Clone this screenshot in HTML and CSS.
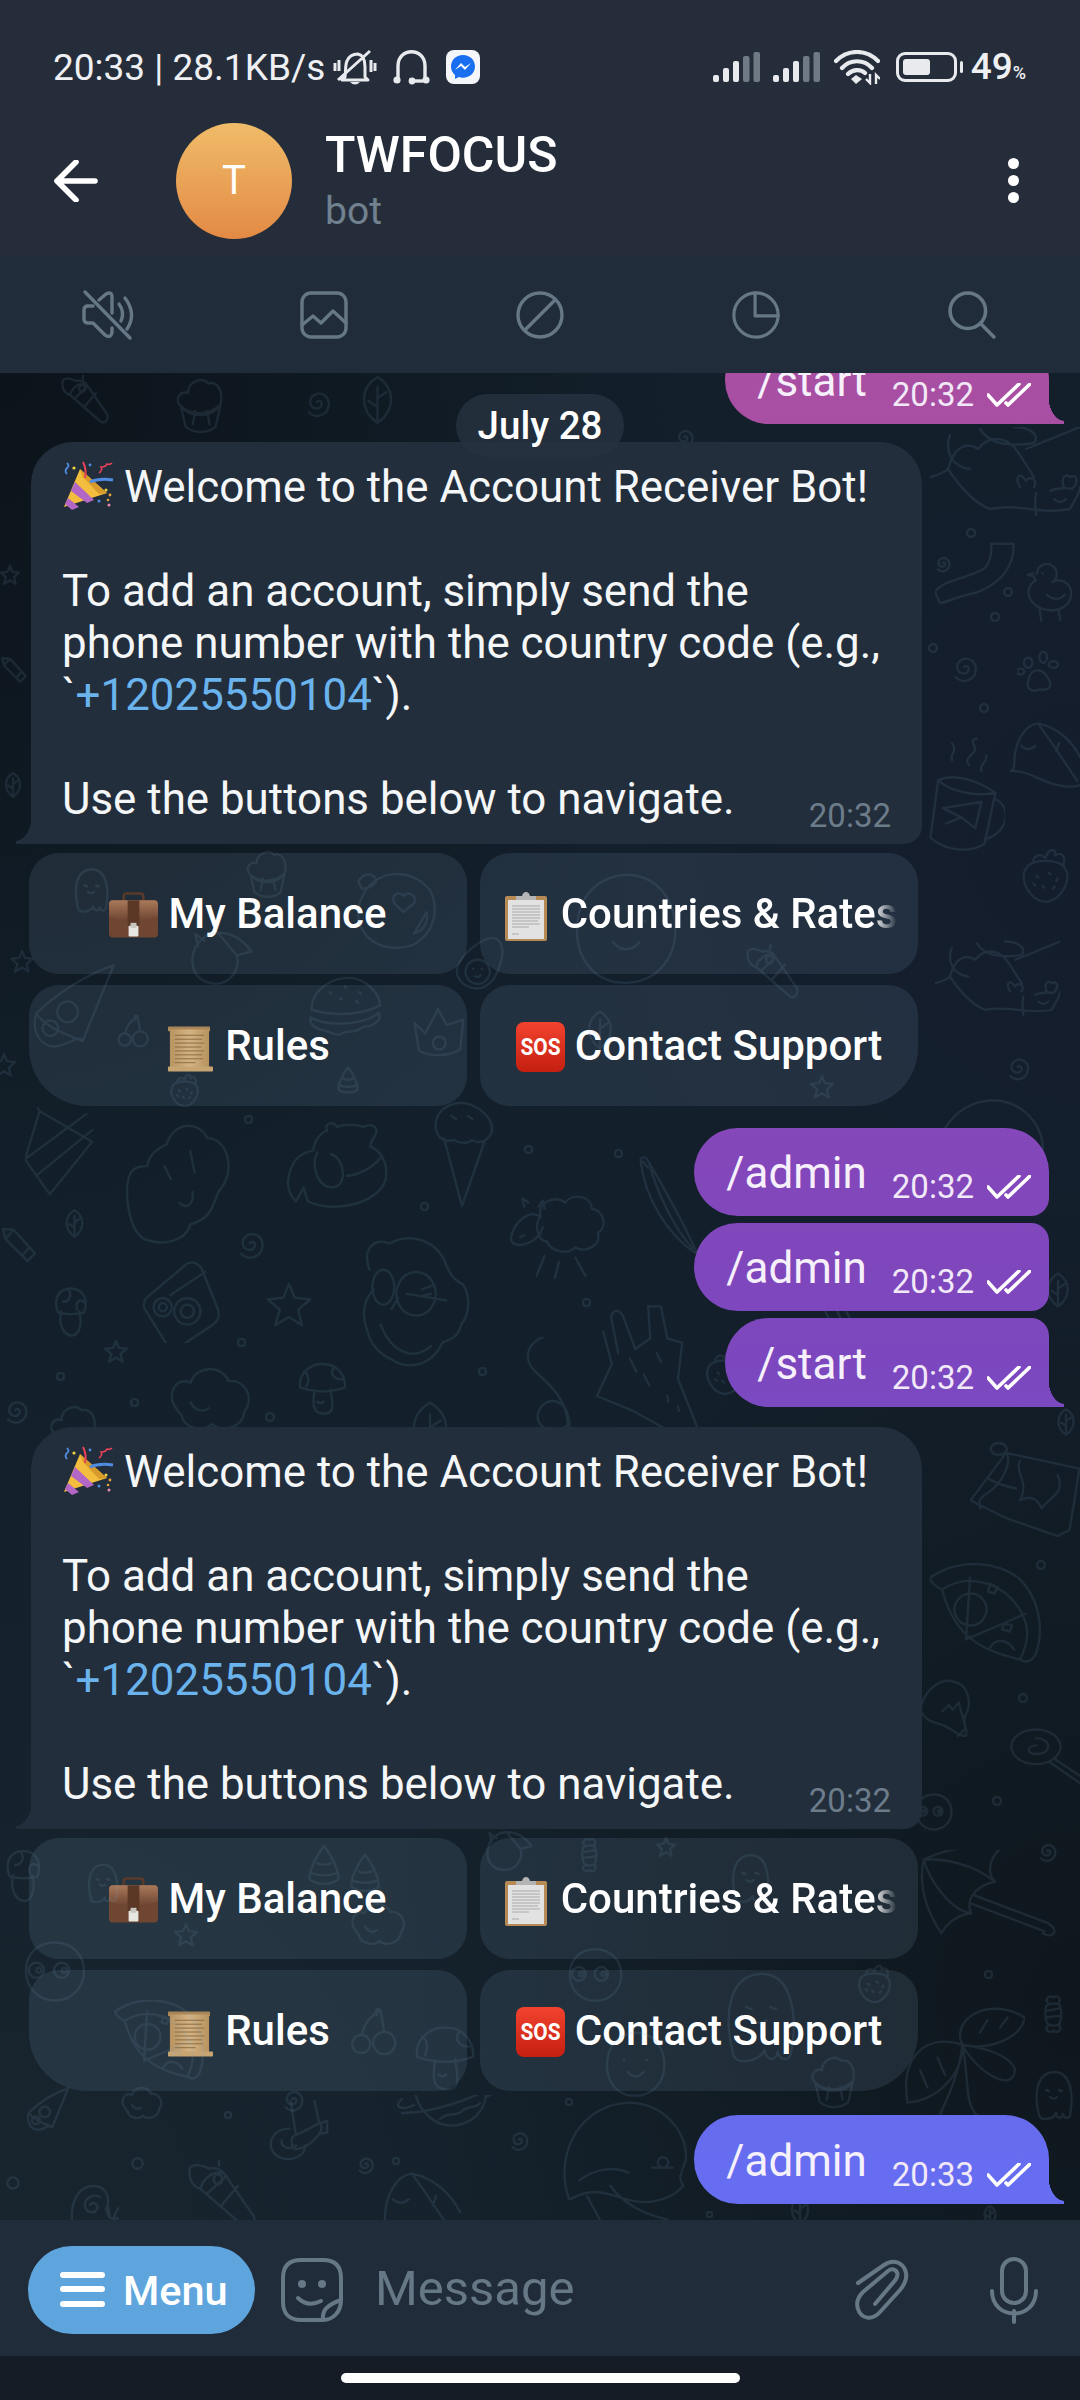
FILE: index.html
```html
<!DOCTYPE html>
<html lang="en">
<head>
<meta charset="utf-8">
<title>TWFOCUS</title>
<link rel="stylesheet" href="styles.css">
</head>
<body>
<svg class="defs" aria-hidden="true">
  <defs>
    <linearGradient id="gCase" x1="0" y1="0" x2="0" y2="1"><stop offset="0" stop-color="#a9795a"/><stop offset="1" stop-color="#6a4230"/></linearGradient>
    <linearGradient id="gSos" x1="0" y1="0" x2="0" y2="1"><stop offset="0" stop-color="#f2432f"/><stop offset="1" stop-color="#c41f10"/></linearGradient>
    <linearGradient id="gScroll" x1="0" y1="0" x2="1" y2="0"><stop offset="0" stop-color="#b8935f"/><stop offset=".5" stop-color="#d4b383"/><stop offset="1" stop-color="#b8935f"/></linearGradient>
    <symbol id="e-party" viewBox="0 0 52 52">
      <path d="M1 47 L17 9 L44 33 Z" fill="#f3bd3d"/>
      <path d="M12 22 L31 40 L24 43 L8 31Z" fill="#b266c6"/>
      <path d="M5 38 L16 47 L9 50 L2 44Z" fill="#b266c6"/>
      <path d="M17 9 L44 33 L36 34 L20 17Z" fill="#d89a2a"/>
      <path d="M27 22 Q36 18 50 20" fill="none" stroke="#4f8be0" stroke-width="3"/>
      <path d="M20 2 Q24 10 22 18" fill="none" stroke="#e8415a" stroke-width="2"/>
      <path d="M36 13 q4-3 2-6 q5 0 6-3 q3 1 5-1" fill="none" stroke="#e8415a" stroke-width="1.6"/>
      <path d="M4 3 q3 3 0 5 q-3 3 0 6" fill="none" stroke="#4f8be0" stroke-width="1.8"/>
      <circle cx="11" cy="8" r="1.6" fill="#f3d33d"/><circle cx="27" cy="5" r="1.4" fill="#4f8be0"/><circle cx="43" cy="30" r="1.5" fill="#f3d33d"/><circle cx="47" cy="35" r="1.4" fill="#e8a23d"/><circle cx="36" cy="41" r="1.5" fill="#4f8be0"/><circle cx="46" cy="45" r="1.5" fill="#f08ab0"/><circle cx="45" cy="40" r="1.3" fill="#e8a23d"/>
    </symbol>
    <symbol id="e-case" viewBox="0 0 50 46">
      <path d="M15 10 V4 Q15 1 18 1 H32 Q35 1 35 4 V10" fill="none" stroke="#5a3a28" stroke-width="2.6"/>
      <rect x="0" y="8" width="50" height="38" rx="4" fill="#6f4632"/>
      <path d="M0 24 Q25 36 50 24 V12 Q50 8 46 8 H4 Q0 8 0 12Z" fill="url(#gCase)"/>
      <rect x="19" y="8" width="12" height="26" fill="#5b3826"/>
      <rect x="20" y="34" width="10" height="11" rx="1" fill="#e8e6e2"/>
      <rect x="22" y="31" width="6" height="5" fill="#c9c6c0"/>
    </symbol>
    <symbol id="e-clip" viewBox="0 0 42 50">
      <rect x="0" y="5" width="42" height="45" rx="2" fill="#b58a55"/>
      <rect x="3" y="9" width="36" height="39" fill="#e2e2e2"/>
      <path d="M7 15H35M7 18H35M7 21H35M7 24H35M7 27H35M7 30H33M7 33H35M7 36H24" stroke="#a9a9a9" stroke-width="1"/>
      <path d="M7 43H14" stroke="#a9a9a9" stroke-width="1"/>
      <path d="M11 9 V5 H17 Q18 1 21 1 Q24 1 25 5 H31 V9Z" fill="#b4b4b4"/>
    </symbol>
    <symbol id="e-scroll" viewBox="0 0 48 50">
      <rect x="2" y="3" width="43" height="5" rx="1" fill="#a98658"/>
      <rect x="4" y="6" width="40" height="41" fill="url(#gScroll)"/>
      <path d="M9 12H39M9 16H37M9 20H39M9 24H36M9 28H39M9 32H37M9 36H38M9 40H30" stroke="#8a6c45" stroke-width="1"/>
      <rect x="2" y="44" width="46" height="5" rx="1" fill="#c7a572"/>
    </symbol>
    <symbol id="e-sos" viewBox="0 0 49 50">
      <rect x="0" y="0" width="49" height="50" rx="8" fill="url(#gSos)"/>
      <text x="24.5" y="33" text-anchor="middle" class="sos" textLength="40" lengthAdjust="spacingAndGlyphs">SOS</text>
    </symbol>
    <symbol id="ticks" viewBox="0 0 44 24">
      <path d="M1 12 L10 22 L32 1 M19 20 L21 22 L43 1" fill="none" stroke="#fff" stroke-width="3.6" stroke-linecap="round" stroke-linejoin="round"/>
    </symbol>

    <symbol id="d-sheep" viewBox="0 0 100 100"><path d="M32 38c-4-14 14-22 24-14 8-10 26-6 26 6 12 2 16 18 6 24 4 12-12 20-22 14-8 8-24 4-28-6-10 0-12-18-6-24zM32 38C20 30 6 44 3 58c-1 8 8 9 16 6 8-3 13-8 15-16M36 76L28 96M66 78l10 18M50 82l-4 16M12 58l4-2M16 28l-2-8 6 4M30 28l4-6 2 8"/></symbol>
    <symbol id="d-fox" viewBox="0 0 100 120"><path d="M10 30l8 30-14 30 34 14 36 20 26 0-20-50 4-34-14-4-6-30-12 0 2 30-14 10L28 14c-6-8-12-2-10 6l6 30M35 55l6 12M60 50l4 8M48 70l5 10M70 90l1 6M80 100l1 4"/></symbol>
    <symbol id="d-berry" viewBox="0 0 100 100"><path d="M20 40C4 60 24 96 50 98c26-2 46-38 30-58C68 28 32 28 20 40zM30 30c6-14 16-8 20-4 4-14 18-18 16-4 8-6 18 0 14 14M35 55l3 3M55 50l3 3M70 60l-2 4M45 72l3 3M62 76l3-3M30 68l3 3"/></symbol>
    <symbol id="d-creature" viewBox="0 0 150 90"><path d="M0 50C8 48 14 46 18 42 24 20 36 14 48 22 58 10 72 8 84 20 92 30 96 38 104 50M18 42C30 60 44 76 60 82 90 76 110 88 140 82 146 70 150 66 150 60M50 2C60 18 80 20 104 16 110 8 100 0 84 0M20 8C14 24 22 40 40 42M90 60c-6-10 0-16 6-6 4-6 12-2 8 6M106 66c-2 8 0 18 0 22M120 64c4-2 16-4 22-2 8-8 4-16-2-12-4-4-10 0-6 10M124 72c4 4 8 4 12 0M96 22L150 0"/></symbol>
    <symbol id="d-swirl" viewBox="0 0 100 100"><path d="M50 50c6-8 18 0 12 12-8 12-30 8-32-10-2-20 22-34 42-22 20 14 16 48-8 58-14 6-30 2-38-8"/></symbol>
    <symbol id="d-ghost" viewBox="0 0 100 100"><path d="M20 90C10 50 14 6 50 4c34 0 40 46 32 86-2 8-12 8-14-2-2 12-14 8-14-2-4 12-32 18-34 4zM34 40l6 2M60 40l6 2M42 54c4 4 10 4 14 0"/></symbol>
    <symbol id="d-cup" viewBox="0 0 100 100"><path d="M18 52c16 20 50 20 66-2l-8 36c-14 12-36 12-50 0zM18 52C6 40 18 26 30 30c0-18 22-28 34-16 14-4 26 12 20 36-20 18-48 18-66 2zM42 60l-4 22M62 60l4 22"/></symbol>
    <symbol id="d-puff" viewBox="0 0 100 100"><path d="M14 34C28 6 68 4 88 30c10 20 6 46-18 60-20 8-50 4-60-22C6 56 8 44 14 34zM8 20c6-10 16-10 20-2 0 6-8 10-16 10zM58 36c-4-6-14-2-10 8l10 10 12-10c4-8-6-14-12-8zM70 78l14-24c2 10-2 20-14 24z"/></symbol>
    <symbol id="d-pizza" viewBox="0 0 100 100"><path d="M6 60C26 40 60 16 96 4L60 92C40 84 18 76 6 60zM6 60C0 82 12 100 30 98c14-2 26-14 30-6M42 46a12 12 0 1 0 1 0zM22 68a9 9 0 1 0 1 0z"/></symbol>
    <symbol id="d-wedge" viewBox="0 0 112 100"><path d="M0 14C30-6 66-2 88 14c22 20 26 52 18 76-4 8-10 10-16 6C60 88 26 80 12 26 4 22 0 18 0 14zM12 26C40 8 76 20 92 50c8 16 6 30-2 46M36 76L40 14M36 76L96 50M40 30a16 16 0 1 0 1 0M60 20l8 4-4 6-6-2zM74 60l8 2-2 6-8-2zM60 84c6-10 18-8 24 2"/></symbol>
    <symbol id="d-cherry" viewBox="0 0 100 100"><path d="M22 60a18 18 0 1 0 1 0zM68 54a22 22 0 1 0 1 0zM24 60C28 36 40 24 60 10M68 54C66 36 64 24 60 10M60 10c-8-6-10 4-6 10"/></symbol>
    <symbol id="d-burger" viewBox="0 0 100 100"><path d="M6 50C4 20 40 2 66 8c20 6 32 24 32 36-30 14-62 14-92 6zM4 60c20 12 70 12 92-6 4 6 0 12-8 16-6 4-12 0-18 6-8 6-16 0-24 6-8 4-14-2-22-4C12 76 2 70 4 60zM30 26l2 2M50 18l2 2M70 26l2 2M44 34l2 2M66 38l2 2"/></symbol>
    <symbol id="d-crown" viewBox="0 0 100 100"><path d="M4 30l20 20L48 4l16 30 32-10-6 56c-24 14-58 14-78 2zM50 56a12 12 0 1 0 1 0z"/></symbol>
    <symbol id="d-bird" viewBox="0 0 100 100"><path d="M6 50C4 26 20 6 44 4c20 0 36 8 50 28l-22 6c6 20-10 44-34 42C20 78 8 68 6 50zM14 24l-4-18 14 10M44 4l28 34"/></symbol>
    <symbol id="d-corn" viewBox="0 0 100 100"><path d="M50 4C70 30 86 64 84 84c-16 14-52 14-68 0C14 64 30 30 50 4zM34 46c10 4 22 4 32 0M22 70c18 6 38 6 56 0"/></symbol>
    <symbol id="d-star" viewBox="0 0 100 100"><path d="M50 4l12 30 34 4-26 22 8 34-28-18-30 18 10-34L4 38l34-4z"/></symbol>
    <symbol id="d-avo" viewBox="0 0 100 100"><path d="M82 6c14 6 14 30 6 50-8 26-24 42-44 40C22 94 6 76 12 56 20 34 60 -2 82 6zM48 44a22 22 0 1 0 1 0zM40 60l1 1M56 60l1 1M44 74c4 2 8 2 10-2"/></symbol>
    <symbol id="d-rocket" viewBox="0 0 100 100"><path d="M40 -10L76 -10 86 36 50 54zM50 54c-10 2-8 18 0 22 14-2 26-10 36-24 6-10 2-16 0-16M86 36l12-4 0 18-12 2M40 44C20 44 8 58 12 74c6 18 30 22 46 10 4-4 6-8 6-14M28 62c-2 10 12 16 22 8"/></symbol>
    <symbol id="d-planet" viewBox="0 0 100 38"><path d="M18 -10C20 16 40 34 62 30 82 26 92 10 90 -10M18 10C6 16-4 12 6 4M90 2c4-2 8-4 10-6M6 18c30 0 70-14 90-26M44 24c8-8 18-2 22-8 6-6 14-2 18-8"/></symbol>
    <symbol id="d-cloud" viewBox="0 0 100 100"><path d="M14 50C2 36 14 14 30 22 36 2 66 2 72 20c18-2 30 18 18 34-2 18-26 24-36 14-10 10-32 4-34-10-2-2-4-4-6-8zM30 44c4 8 14 12 20 6"/></symbol>
    <symbol id="d-cloudbear" viewBox="0 0 100 115"><path d="M20 40C22 28 32 22 38 20 44 0 66-4 76 14c18 0 28 30 10 50-6 14-6 24-26 30-4 16-26 20-42 14C2 100-2 60 4 48c2-6 8-8 16-8zM36 40l6 12M60 26l4 20M50 74c6 6 14 2 12-10"/></symbol>
    <symbol id="d-hamster" viewBox="0 0 100 100"><path d="M0 66C2 44 14 36 26 34 26 24 36 14 40 14c-4-8 6-10 10-4 10-4 20-2 28 0 6-4 14 0 12 6-2 6-6 8-6 14 10 4 18 16 16 32-4 24-50 38-80 24L16 72 8 86C2 80 0 72 0 66zM30 36c-6 10-2 34 14 36 18 0 14-30 0-34M60 60c10 0 26-8 34-18"/></symbol>
    <symbol id="d-owl" viewBox="0 0 100 120"><path d="M8 30C0 10 14 0 26 6c18-10 40-4 50 14 6 18 12 20 18 24 6 10 6 26-2 36-4 16-16 14-18 18-12 24-36 22-46 14-10-4-20-14-22-26C0 70 2 58 12 48M20 30a10 16 0 1 0 1 0zM50 32a18 20 0 1 0 1 0zM42 52l36 6M56 48l10-4M56 54l8-2M18 80c10 26 30 34 46 20M34 56l-6 10"/></symbol>
    <symbol id="d-snail" viewBox="0 0 100 100"><path d="M4 80C0 30 24 6 50 8c24 2 32 28 22 46l6 16c6 4 12 6 18 2M40 46c6-8 18-2 14 8-4 10-22 8-24-6-2-14 14-26 30-18M80 70l-4-22M88 70l8-18"/></symbol>
    <symbol id="d-cream" viewBox="0 0 100 100"><path d="M20 40l60 52c10 8 18-4 14-14L54 20c-12-8-30 4-34 20zM20 40C8 36 2 24 6 10c8-6 18-2 26 2 6-2 18 0 22 8M30 46l26-24M50 62l22-26M46 8l0-8M44 20a6 7 0 1 0 1 0z"/></symbol>
    <symbol id="d-whale" viewBox="0 0 100 100"><path d="M6 76C-6 40 16 2 54 2c30 2 44 28 42 44-4 12-6 14-2 20-8 10-24 14-36 12-16-2-30-14-50-2zM14 62C24 54 40 50 52 56M20 74c8 14 12 24 16 26M38 66c10 14 26 22 44 26M78 44a4 4 0 1 0 1 0zM70 52h16"/></symbol>
    <symbol id="d-camera" viewBox="0 0 100 100"><path d="M6 46L56 4c8-4 14 0 18 6l20 50c2 8 0 14-6 18L46 106c-6 4-12 0-16-6L4 58c-2-4 0-8 2-12zM26 46a11 11 0 1 0 1 0zM26 52a5 5 0 1 0 1 0zM56 46a16 16 0 1 0 1 0zM56 54a8 8 0 1 0 1 0zM36 42L78 14"/></symbol>
    <symbol id="d-choc" viewBox="0 0 110 100"><path d="M0 62L36 14 110 30 100 92 88 98 36 80zM18 40c10 6 18 8 28 10M36 14c6 10-4 30-18 40-6 4-12 8-8 16M50 22c-6 12 10 20 0 40 14-8 20 4 22 8 8-12 24-14 16-34M28 4a8 6 0 1 0 1 0z"/></symbol>
    <symbol id="d-umbrella" viewBox="0 0 140 120"><path d="M4 10C30-4 70-6 80 0 70 10 68 24 76 32 56 36 46 50 52 64 30 60 10 30 4 10zM4 10C0 30 2 54 22 84 28 72 42 64 52 64M4 10c20-2 50 4 72 22M56 46L130 74c12 8 4 16-6 10M52 54L126 82"/></symbol>
    <symbol id="d-leaf" viewBox="0 0 100 100"><path d="M50 4C86 26 86 70 50 96 14 70 14 26 50 4zM50 24v72M50 46l18-12M50 64l-18-12"/></symbol>
    <symbol id="d-leaffish" viewBox="0 0 100 100"><path d="M6 60C6 30 20 4 40 2c30 6 50 28 60 48M6 60c0 6 0 8-6 10 20-2 40 12 60 18 14 4 30 6 40 2M40 2C60 30 80 60 96 84M16 34c6 6 14 6 20 0M70 30l-4 12"/></symbol>
    <symbol id="d-pencil" viewBox="0 0 100 100"><path d="M8 8L36 10 92 72 72 92 14 34zM14 34L36 10M76 58L58 78"/></symbol>
    <symbol id="d-banana" viewBox="0 0 100 160"><path d="M4 6C10 0 14 4 18 12 40 50 70 100 96 160 50 130 10 70 4 6zM18 12C30 60 60 120 88 150M8 10l8 10"/></symbol>
    <symbol id="d-icecream" viewBox="0 0 100 140"><path d="M10 40C2 14 34-6 58 6c22 10 34 30 20 44-6 6-16 6-20 2-8 6-20 4-24 0-8 2-20 2-24-12zM20 50L44 140 74 54M30 20l6 4M52 20l6 4"/></symbol>
    <symbol id="d-mush" viewBox="0 0 100 110"><path d="M6 50C2 20 30 2 52 4c26 0 44 22 42 46-28 10-60 10-88 0zM34 56C32 78 30 90 40 98c10 6 24 4 28-4 4-10 0-24-2-40M14 18a12 18 0 0 1 4 30M72 12a18 14 0 0 0 16 22M40 78c4 4 8 4 12 0"/></symbol>
    <symbol id="d-shroom" viewBox="0 0 70 100"><path d="M8 50C-2 24 8 2 34 2c24 0 36 24 26 48-16 4-36 4-52 0zM14 48c-4 20 0 44 20 48 16 2 24-24 16-48M30 6a12 14 0 0 1-12 22M60 30c-8-8-18-2-14 14"/></symbol>
    <symbol id="d-noodle" viewBox="0 0 100 80"><path d="M70 4H98C100 40 70 62 40 68 24 72 12 78 6 78L0 64C12 48 40 48 60 36 68 30 72 16 70 4z"/></symbol>
    <symbol id="d-duck" viewBox="0 0 100 130"><path d="M22 24a22 22 0 1 1 34 18c12-8 42-4 42 26 0 28-30 40-52 36C22 100 0 84 4 58 6 48 12 42 20 38 16 34 14 30 14 28L0 26l14-4M28 104l4 24M70 104l4 22M44 70c12 12 30 12 40 0M34 22l1 1"/></symbol>
    <symbol id="d-paw" viewBox="0 0 100 100"><path d="M30 60C36 44 56 40 68 56c8 12 16 20 8 32-8 8-18 2-24 4-8 4-22 4-26-8-2-10 2-16 4-24zM26 16a10 12 0 1 0 1 0zM62 2a9 13 0 1 0 1 0zM86 24a11 8 0 1 0 1 0zM8 42a9 7 0 1 0 1 0z"/></symbol>
    <symbol id="d-mug" viewBox="0 0 100 150"><path d="M14 56L4 130c20 18 52 20 70 8l14-66C64 56 34 46 14 56zM14 56C30 70 60 78 88 72M86 80c22 6 22 44-12 52M20 92l50-8-8 34-18-14-20 8M20 92l24 12M32 30c-4-10 8-8 0-22M54 36c-10-10 14-14 6-26-4-6 2-8 4-8M70 44c-4-8 8-10 6-20"/></symbol>
    <symbol id="d-lolli" viewBox="0 0 100 90"><path d="M40 2a34 24 0 1 1-1 0zM40 14c20 0 24 22 0 22-14 0-14-12 0-12M64 42L100 66M60 48L100 76"/></symbol>
    <symbol id="d-bulb" viewBox="0 0 80 100"><path d="M0 50C8 14 34 0 52 4 78 8 84 40 72 60 68 70 76 84 74 90 68 98 44 74 30 72 16 70 6 62 0 50zM60 92l12-12M36 52l10-10 6 8 10-12 12 44"/></symbol>
    <symbol id="d-palm" viewBox="0 0 100 100"><path d="M50 40C40 20 70 0 100 18 96 36 70 44 50 40zM50 40C20 30 0 50 6 86 30 84 50 64 50 40zM50 40C60 60 90 80 92 60 90 50 70 42 50 40zM50 40C56 70 50 90 66 100M50 40C46 70 34 90 30 100M16 60l6 14M30 50l6 14M64 30l6-10M80 26l6-8"/></symbol>
    <symbol id="d-candy" viewBox="0 0 50 100"><path d="M8 30C4 50 6 70 14 76 22 80 34 80 40 76 46 66 48 46 42 28 34 22 16 22 8 30zM14 24C4 16 10 2 26 8 38 2 48 12 38 24M14 78C2 86 12 100 26 92 40 100 48 88 40 76M12 42l30-6M10 58l32-4"/></symbol>
    <symbol id="d-squiggle" viewBox="0 0 50 95"><path d="M18 0C0 8-2 24 10 36 26 50 44 66 44 92M44 92C40 96 24 100 16 92 6 80 20 62 34 68 46 74 46 90 46 96"/></symbol>
    <symbol id="d-cake" viewBox="0 0 100 120"><path d="M20 4L92 46 34 118 0 70zM0 70L84 8M16 92L92 30M20 4c-6-6 0-12 8-8"/></symbol>
    <symbol id="d-face" viewBox="0 0 100 100"><path d="M10 50C10 20 30 4 54 4c24 2 38 22 38 46 0 26-18 44-42 44S10 76 10 50zM34 42l1 1M66 42l1 1M40 60c6 8 16 8 22 0"/></symbol>
    <symbol id="d-tv" viewBox="0 0 100 100"><path d="M4 50C4 20 24 4 50 4c28 0 46 20 46 46 0 26-20 46-46 46S4 76 4 50zM20 36a12 12 0 1 0 1 0zM60 36a12 12 0 1 0 1 0zM24 44a4 4 0 1 0 1 0zM64 44a4 4 0 1 0 1 0z"/></symbol>
    <symbol id="d-ring" viewBox="0 0 100 100"><circle cx="50" cy="50" r="40"/></symbol>
  </defs>
</svg>

<main class="phone">
  <header class="top">
    <div class="status">
      <div class="status-left">
        <span class="status-text">20:33 | 28.1KB/s</span>
        <svg class="ic-bell" viewBox="0 0 44 37"><path d="M12 28 C13 22 12 16 14 12 C16 7 20 5 25 5 C30 6 32 12 32 18 V28 L35 31 H9 Z M5 31 L37 2 M2 14 v8 M6 11 v11 M38 11 v12 M42 14 v8"/><path d="M17 33 H27 Q22 38 17 33Z" class="bell-fill"/></svg>
        <svg class="ic-phones" viewBox="0 0 37 35"><path d="M5 29 V16 C5 -3 32 -3 32 16 V29"/><circle cx="4" cy="30" r="3.6"/><circle cx="33" cy="30" r="3.6"/><circle cx="19" cy="31" r="3.4"/><path d="M19 31 H30"/></svg>
        <svg class="ic-messenger" viewBox="0 0 34 34"><rect width="34" height="34" rx="8" fill="#f4f6fa"/><path d="M17 5 C10 5 5 10 5 16.5 C5 20 6.5 23 9 25 V29 L13 27 C14 27.5 15.5 27.7 17 27.7 C24 27.7 29 22.7 29 16.5 C29 10 24 5 17 5Z" fill="#1a6ff0"/><path d="M9 20 L15 13 L19 17 L25 13 L19 20 L15 16Z" fill="#fff"/></svg>
      </div>
      <div class="status-right">
        <svg class="ic-signal" viewBox="0 0 47 30"><rect y="23" width="6" height="7" rx="2" fill="#e8eaee"/><rect x="10" y="16" width="6" height="14" rx="2" fill="#e8eaee"/><rect x="20" y="9" width="6" height="21" rx="2" fill="#e8eaee"/><rect x="30" y="4" width="6.5" height="26" rx="2" fill="#707a85"/><rect x="40.500" y="0" width="6.500" height="30" rx="2" fill="#707a85"/></svg>
        <svg class="ic-signal" viewBox="0 0 47 30"><rect y="23" width="6" height="7" rx="2" fill="#e8eaee"/><rect x="10" y="16" width="6" height="14" rx="2" fill="#e8eaee"/><rect x="20" y="9" width="6" height="21" rx="2" fill="#e8eaee"/><rect x="30" y="4" width="6.5" height="26" rx="2" fill="#707a85"/><rect x="40.500" y="0" width="6.500" height="30" rx="2" fill="#707a85"/></svg>
        <svg class="ic-wifi" viewBox="0 0 46 35"><path d="M2 11 C14 -1 32 -1 44 11 M8 18 C16 9 30 9 38 18 M14 24 C19 19 27 19 31 23" fill="none" stroke="#e8eaee" stroke-width="4.2" stroke-linecap="round"/><path d="M17 29 L22 25 L28 29 L22 34Z" fill="#e8eaee"/><path d="M36 24 V33 L32 29 M42 34 V25 L46 29" fill="none" stroke="#e8eaee" stroke-width="2.4"/></svg>
        <span class="battery"><span class="battery-fill"></span></span>
        <span class="battery-nub"></span>
        <span class="battery-text">49<small>%</small></span>
      </div>
    </div>
    <div class="title-row">
      <svg class="ic-back" viewBox="0 0 44 42"><path d="M3 21 H41 M22 2 L3 21 L22 40" fill="none" stroke="#fff" stroke-width="5.6" stroke-linecap="round" stroke-linejoin="round"/></svg>
      <div class="avatar">T</div>
      <div class="title-text">
        <div class="name">TWFOCUS</div>
        <div class="sub">bot</div>
      </div>
      <div class="dots"><i></i><i></i><i></i></div>
    </div>
  </header>

  <nav class="tabs">
    <svg class="tab-ic tab-mute" viewBox="0 0 54 48"><path d="M2 1 L47 47 M10 15 H5 Q1 15 1 19 V28 Q1 32 5 32 H10 L22 44 Q28 48 29 41 V37 M16 9 L23 3 Q29 0 29 6 V22 M36 13 Q42 21 38 30 M42 7 Q54 23 44 38"/></svg>
    <svg class="tab-ic" viewBox="0 0 48 48"><rect x="2" y="2" width="44" height="44" rx="9"/><path d="M2 34 L13 25 L21 32 L33 20 L46 32"/></svg>
    <svg class="tab-ic" viewBox="0 0 48 48"><circle cx="24" cy="24" r="22"/><path d="M9 39 L39 9"/></svg>
    <svg class="tab-ic" viewBox="0 0 52 52"><circle cx="26" cy="26" r="24"/><path d="M25 2 V27 H50"/></svg>
    <svg class="tab-ic" viewBox="0 0 46 46"><circle cx="19" cy="19" r="17"/><path d="M31 31 L44 44"/></svg>
  </nav>

  <section class="chat">
    <svg class="wall" viewBox="0 373 1080 1847" aria-hidden="true">
      <use href="#d-cream" x="60" y="375" width="50" height="50"/>
      <use href="#d-cup" x="165" y="375" width="70" height="60"/>
      <use href="#d-swirl" x="300" y="385" width="34" height="34"/>
      <use href="#d-leaf" x="350" y="375" width="55" height="50"/>
      <use href="#d-swirl" x="672" y="425" width="24" height="24"/>
      <use href="#d-pencil" x="0" y="640" width="28" height="60"/>
      <use href="#d-star" x="0" y="560" width="20" height="30"/>
      <use href="#d-leaf" x="0" y="760" width="26" height="50"/>

      <use href="#d-creature" x="930" y="427" width="150" height="90"/>
      <use href="#d-noodle" x="935" y="540" width="80" height="65"/>
      <use href="#d-swirl" x="932" y="553" width="21" height="20"/>
      <use href="#d-duck" x="1027" y="563" width="45" height="59"/>
      <use href="#d-ring" x="966" y="528" width="10" height="10"/>
      <use href="#d-ring" x="1003" y="587" width="10" height="10"/>
      <use href="#d-ring" x="990" y="612" width="10" height="10"/>
      <use href="#d-ring" x="928" y="643" width="10" height="10"/>
      <use href="#d-ring" x="979" y="703" width="10" height="10"/>
      <use href="#d-swirl" x="947" y="650" width="34" height="34"/>
      <use href="#d-paw" x="1017" y="650" width="42" height="44"/>
      <use href="#d-leaffish" x="1010" y="722" width="70" height="70"/>
      <use href="#d-mug" x="927" y="737" width="78" height="116"/>

      <use href="#d-ghost" x="69" y="857" width="45" height="66"/>
      <use href="#d-cup" x="241" y="847" width="52" height="53"/>
      <use href="#d-puff" x="351" y="860" width="90" height="97"/>
      <use href="#d-bird" x="169" y="930" width="106" height="67"/>
      <use href="#d-pizza" x="31" y="953" width="86" height="104"/>
      <use href="#d-cherry" x="117" y="1003" width="34" height="54"/>
      <use href="#d-burger" x="303" y="973" width="83" height="74"/>
      <use href="#d-crown" x="410" y="1007" width="58" height="53"/>
      <use href="#d-corn" x="334" y="1063" width="28" height="34"/>
      <use href="#d-star" x="10" y="950" width="24" height="23"/>
      <use href="#d-star" x="-8" y="1050" width="24" height="30"/>
      <use href="#d-avo" x="451" y="933" width="55" height="60"/>
      <use href="#d-face" x="560" y="870" width="130" height="120"/>
      <use href="#d-cream" x="745" y="925" width="55" height="95"/>
      <use href="#d-berry" x="1014" y="842" width="63" height="61"/>
      <use href="#d-creature" x="935" y="937" width="125" height="84"/>
      <use href="#d-swirl" x="1002" y="1052" width="31" height="30"/>
      <use href="#d-star" x="810" y="1075" width="24" height="24"/>
      <use href="#d-leaf" x="560" y="1010" width="80" height="40"/>
      <use href="#d-berry" x="162" y="1070" width="45" height="37"/>
      <use href="#d-whale" x="925" y="1098" width="130" height="114"/>

      <use href="#d-cake" x="25" y="1107" width="73" height="90"/>
      <use href="#d-cloudbear" x="109" y="1123" width="141" height="124"/>
      <use href="#d-hamster" x="270" y="1117" width="134" height="98"/>
      <use href="#d-icecream" x="429" y="1100" width="75" height="107"/>
      <use href="#d-sheep" x="498" y="1178" width="122" height="102"/>
      <use href="#d-banana" x="638" y="1153" width="62" height="104"/>
      <use href="#d-leaf" x="60" y="1205" width="29" height="37"/>
      <use href="#d-swirl" x="232" y="1224" width="36" height="38"/>
      <use href="#d-owl" x="344" y="1237" width="143" height="131"/>
      <use href="#d-camera" x="141" y="1260" width="82" height="83"/>
      <use href="#d-star" x="266" y="1282" width="46" height="46"/>
      <use href="#d-star" x="104" y="1340" width="24" height="23"/>
      <use href="#d-pencil" x="0" y="1203" width="38" height="84"/>
      <use href="#d-shroom" x="54" y="1287" width="35" height="51"/>
      <use href="#d-mush" x="295" y="1362" width="55" height="56"/>
      <use href="#d-cloud" x="163" y="1363" width="91" height="90"/>
      <use href="#d-fox" x="592" y="1300" width="108" height="128"/>
      <use href="#d-squiggle" x="525" y="1337" width="49" height="91"/>
      <use href="#d-leaf" x="370" y="1400" width="120" height="60"/>
      <use href="#d-cup" x="27" y="1402" width="93" height="60"/>
      <use href="#d-swirl" x="0" y="1392" width="31" height="36"/>
      <use href="#d-ring" x="244" y="1115" width="9" height="9"/>
      <use href="#d-ring" x="524" y="1145" width="9" height="9"/>
      <use href="#d-ring" x="614" y="1149" width="9" height="9"/>
      <use href="#d-ring" x="420" y="1202" width="9" height="9"/>
      <use href="#d-ring" x="237" y="1338" width="9" height="9"/>
      <use href="#d-ring" x="56" y="1372" width="9" height="9"/>
      <use href="#d-ring" x="130" y="1398" width="9" height="9"/>
      <use href="#d-ring" x="265" y="1412" width="10" height="10"/>
      <use href="#d-ring" x="478" y="1367" width="9" height="9"/>
      <use href="#d-ring" x="582" y="1298" width="9" height="9"/>
      <use href="#d-ring" x="1030" y="1180" width="8" height="8"/>
      <use href="#d-banana" x="810" y="1260" width="70" height="115"/>
      <use href="#d-berry" x="700" y="1340" width="50" height="60"/>
      <use href="#d-swirl" x="1000" y="1340" width="40" height="40"/>
      <use href="#d-leaf" x="1040" y="1260" width="36" height="60"/>

      <use href="#d-leaf" x="1052" y="1400" width="28" height="44"/>
      <use href="#d-choc" x="970" y="1439" width="110" height="99"/>
      <use href="#d-wedge" x="930" y="1563" width="112" height="101"/>
      <use href="#d-bulb" x="920" y="1671" width="50" height="78"/>
      <use href="#d-lolli" x="1007" y="1728" width="73" height="65"/>
      <use href="#d-swirl" x="1035" y="1836" width="24" height="30"/>
      <use href="#d-tv" x="915" y="1783" width="38" height="58"/>
      <use href="#d-umbrella" x="918" y="1850" width="142" height="119"/>
      <use href="#d-palm" x="900" y="1995" width="125" height="125"/>
      <use href="#d-candy" x="1043" y="1990" width="20" height="48"/>
      <use href="#d-ghost" x="1028" y="2070" width="52" height="50"/>
      <use href="#d-ring" x="1036" y="1560" width="10" height="10"/>
      <use href="#d-ring" x="1018" y="1693" width="10" height="10"/>
      <use href="#d-ring" x="992" y="1796" width="10" height="10"/>
      <use href="#d-ring" x="984" y="1970" width="9" height="9"/>

      <use href="#d-shroom" x="0" y="1850" width="48" height="53"/>
      <use href="#d-ghost" x="76" y="1863" width="54" height="40"/>
      <use href="#d-tv" x="14" y="1940" width="82" height="63"/>
      <use href="#d-star" x="172" y="1923" width="28" height="24"/>
      <use href="#d-corn" x="303" y="1840" width="42" height="50"/>
      <use href="#d-corn" x="345" y="1850" width="40" height="46"/>
      <use href="#d-cloud" x="317" y="1900" width="120" height="60"/>
      <use href="#d-bird" x="482" y="1830" width="55" height="50"/>
      <use href="#d-candy" x="578" y="1837" width="22" height="36"/>
      <use href="#d-star" x="654" y="1837" width="24" height="20"/>
      <use href="#d-ghost" x="723" y="1853" width="55" height="50"/>
      <use href="#d-tv" x="544" y="1947" width="103" height="56"/>
      <use href="#d-ghost" x="702" y="1970" width="118" height="93"/>
      <use href="#d-berry" x="847" y="1960" width="55" height="43"/>
      <use href="#d-cherry" x="350" y="2000" width="50" height="60"/>
      <use href="#d-wedge" x="110" y="2000" width="100" height="80"/>
      <use href="#d-mush" x="400" y="2025" width="90" height="70"/>
      <use href="#d-face" x="600" y="2030" width="70" height="70"/>
      <use href="#d-cup" x="792" y="2053" width="83" height="57"/>
      <use href="#d-swirl" x="275" y="2085" width="35" height="28"/>

      <use href="#d-pizza" x="26" y="2080" width="44" height="57"/>
      <use href="#d-cloud" x="110" y="2085" width="62" height="45"/>
      <use href="#d-rocket" x="256" y="2100" width="80" height="65"/>
      <use href="#d-planet" x="396" y="2095" width="100" height="38"/>
      <use href="#d-swirl" x="503" y="2127" width="31" height="25"/>
      <use href="#d-swirl" x="353" y="2153" width="24" height="22"/>
      <use href="#d-ring" x="131" y="2157" width="13" height="13"/>
      <use href="#d-ring" x="6" y="2176" width="14" height="14"/>
      <use href="#d-ring" x="224" y="2111" width="8" height="8"/>
      <use href="#d-ring" x="392" y="2157" width="8" height="8"/>
      <use href="#d-snail" x="52" y="2182" width="86" height="50"/>
      <use href="#d-cream" x="179" y="2160" width="86" height="72"/>
      <use href="#d-leaffish" x="344" y="2172" width="152" height="80"/>
      <use href="#d-whale" x="550" y="2100" width="152" height="130"/>
      <use href="#d-leaf" x="770" y="2195" width="60" height="30"/>
      <use href="#d-leaf" x="960" y="2205" width="60" height="20"/>
      <use href="#d-ring" x="565" y="2098" width="8" height="8"/>
      <use href="#d-ring" x="706" y="2211" width="7" height="7"/>
    </svg>

    <div class="date">July 28</div>

    <div class="msg out first-clip tail">
      <span class="out-text">/start</span>
      <span class="meta"><span class="time">20:32</span><svg class="ticks"><use href="#ticks"/></svg></span>
    </div>

    <article class="msg in tail">
      <p class="line"><svg class="emoji party"><use href="#e-party"/></svg><span class="after-emoji">Welcome to the Account Receiver Bot!</span></p>
      <p class="line">&nbsp;</p>
      <p class="line">To add an account, simply send the</p>
      <p class="line">phone number with the country code (e.g.,</p>
      <p class="line">`<span class="link">+12025550104</span>`).</p>
      <p class="line">&nbsp;</p>
      <p class="line">Use the buttons below to navigate.</p>
      <span class="in-time">20:32</span>
    </article>
    <div class="keys">
      <button class="key"><svg class="emoji k-case"><use href="#e-case"/></svg><span>My Balance</span></button>
      <button class="key"><svg class="emoji k-clip"><use href="#e-clip"/></svg><span class="fade">Countries &amp; Rates</span></button>
      <button class="key bl"><svg class="emoji k-scroll"><use href="#e-scroll"/></svg><span>Rules</span></button>
      <button class="key br"><svg class="emoji k-sos"><use href="#e-sos"/></svg><span>Contact Support</span></button>
    </div>

    <div class="msg out group-start top-round">
      <span class="out-text">/admin</span>
      <span class="meta"><span class="time">20:32</span><svg class="ticks"><use href="#ticks"/></svg></span>
    </div>
    <div class="msg out next">
      <span class="out-text">/admin</span>
      <span class="meta"><span class="time">20:32</span><svg class="ticks"><use href="#ticks"/></svg></span>
    </div>
    <div class="msg out next tall tail">
      <span class="out-text">/start</span>
      <span class="meta"><span class="time">20:32</span><svg class="ticks"><use href="#ticks"/></svg></span>
    </div>

    <article class="msg in tail second">
      <p class="line"><svg class="emoji party"><use href="#e-party"/></svg><span class="after-emoji">Welcome to the Account Receiver Bot!</span></p>
      <p class="line">&nbsp;</p>
      <p class="line">To add an account, simply send the</p>
      <p class="line">phone number with the country code (e.g.,</p>
      <p class="line">`<span class="link">+12025550104</span>`).</p>
      <p class="line">&nbsp;</p>
      <p class="line">Use the buttons below to navigate.</p>
      <span class="in-time">20:32</span>
    </article>
    <div class="keys">
      <button class="key"><svg class="emoji k-case"><use href="#e-case"/></svg><span>My Balance</span></button>
      <button class="key"><svg class="emoji k-clip"><use href="#e-clip"/></svg><span class="fade">Countries &amp; Rates</span></button>
      <button class="key bl"><svg class="emoji k-scroll"><use href="#e-scroll"/></svg><span>Rules</span></button>
      <button class="key br"><svg class="emoji k-sos"><use href="#e-sos"/></svg><span>Contact Support</span></button>
    </div>

    <div class="msg out group-end top-round tall tail">
      <span class="out-text">/admin</span>
      <span class="meta"><span class="time">20:33</span><svg class="ticks"><use href="#ticks"/></svg></span>
    </div>
  </section>

  <footer class="composer">
    <button class="menu"><svg class="menu-ic" viewBox="0 0 45 36"><path d="M3 3 H42 M3 17 H42 M3 32 H42"/></svg><span>Menu</span></button>
    <svg class="comp-ic sticker" viewBox="0 0 62 64"><path d="M42 62 H20 C8 62 2 55 2 44 V20 C2 8 8 2 20 2 H42 C54 2 60 8 60 20 V42 C60 54 52 62 42 62 C41 52 46 47 60 42"/><path d="M17 40 C24 47 32 47 40 43"/><circle cx="21" cy="26" r="4" class="fillc"/><circle cx="41" cy="26" r="4" class="fillc"/></svg>
    <span class="placeholder">Message</span>
    <svg class="comp-ic attach" viewBox="0 0 53 62"><path d="M2 24 L28 6 C38 -1 48 4 50 14 C51 20 49 25 44 31 L24 53 C16 62 5 60 2 50 C0 44 2 38 7 33 L32 12 C37 8 43 12 41 18 C40 21 38 23 36 25 L19 45"/></svg>
    <svg class="comp-ic mic" viewBox="0 0 48 66"><rect x="12" y="2" width="24" height="44" rx="12"/><path d="M2 34 C2 64 46 64 46 34 M24 54 V65"/></svg>
  </footer>

  <div class="navbar"><span class="home"></span></div>
</main>
</body>
</html>
```

FILE: styles.css
```css
* { box-sizing: border-box; }
html, body { margin: 0; padding: 0; background: #151c25; }
body { font-family: Roboto, "Noto Sans", sans-serif; color: #fff; }
.defs { position: absolute; width: 0; height: 0; }
symbol[id^="d-"] path, symbol[id^="d-"] circle { vector-effect: non-scaling-stroke; }
.sos { font: 700 23px Roboto, sans-serif; fill: #fff; }

.phone { width: 1080px; height: 2400px; display: flex; flex-direction: column; overflow: hidden; }

.top { height: 257px; background: #252d3a; flex: none; }
.status { height: 104px; padding: 48px 54px 0 53px; display: flex; justify-content: space-between; align-items: flex-start; }
.status-left { display: flex; align-items: center; height: 38px; }
.status-text { font-size: 37px; font-weight: 400; line-height: 38px; color: #eef0f3; white-space: nowrap; padding-top: 1px; }
.ic-bell { width: 44px; height: 37px; margin-left: 8px; fill: none; stroke: #e8eaee; stroke-width: 3; stroke-linejoin: round; }
.bell-fill { fill: #e8eaee; stroke: none; }
.ic-phones { width: 37px; height: 35px; margin-left: 16px; fill: #e8eaee; stroke: #e8eaee; stroke-width: 0; }
.ic-phones path { fill: none; stroke-width: 3.4; }
.ic-messenger { width: 34px; height: 34px; margin-left: 16px; }
.status-right { display: flex; align-items: center; height: 38px; }
.ic-signal { width: 47px; height: 30px; margin-right: 13px; }
.ic-wifi { width: 46px; height: 35px; margin-left: 1px; }
.battery { width: 61px; height: 30px; margin-left: 16px; border: 3px solid #e8eaee; border-radius: 9px; padding: 4px; display: flex; }
.battery-fill { width: 27px; background: #e8eaee; border-radius: 3px; }
.battery-nub { width: 3px; height: 12px; background: #e8eaee; margin-left: 3px; border-radius: 2px; }
.battery-text { font-size: 37px; font-weight: 500; margin-left: 8px; color: #eef0f3; line-height: 38px; padding-top: 6px; }
.battery-text small { font-size: 18px; }

.title-row { height: 153px; padding: 0 61px 0 54px; display: flex; align-items: center; }
.ic-back { width: 44px; height: 42px; }
.avatar { width: 116px; height: 116px; margin-left: 78px; border-radius: 50%; background: linear-gradient(#f0bc69, #e38a44); display: flex; align-items: center; justify-content: center; font-size: 40px; color: #fff; }
.title-text { margin: -2px 0 0 33px; flex: 1; }
.name { font-size: 50px; font-weight: 500; line-height: 56px; }
.sub { font-size: 39px; line-height: 44px; margin-top: 6px; color: #71818f; }
.dots { display: flex; flex-direction: column; gap: 6px; }
.dots i { width: 11px; height: 11px; border-radius: 50%; background: #fff; }

.tabs { height: 116px; flex: none; background: #212c3a; display: grid; grid-template-columns: repeat(5, 216px); align-items: center; justify-items: center; }
.tab-ic { height: 48px; width: 50px; fill: none; stroke: #667785; stroke-width: 3.4; stroke-linecap: round; stroke-linejoin: round; overflow: visible; }
.tab-mute { width: 54px; margin-left: 3px; }

.chat { flex: 1; position: relative; overflow: hidden; display: flex; flex-direction: column; align-items: flex-start; background:
  radial-gradient(700px 800px at 100% 88%, #0f171d 0%, rgba(15, 23, 29, 0) 100%),
  radial-gradient(900px 900px at 0 100%, #18252f 0%, rgba(24, 37, 47, 0) 100%),
  radial-gradient(700px 900px at 0 0, #0c131a 0%, rgba(12, 19, 26, 0) 100%),
  radial-gradient(800px 900px at 100% 25%, #141d2c 0%, rgba(20, 29, 44, 0) 100%),
  #13202b; }
.wall { position: absolute; inset: 0; width: 100%; height: 100%; fill: none; stroke: rgba(125, 165, 200, .125); stroke-width: 2.4; stroke-linecap: round; stroke-linejoin: round; }
.date { position: absolute; z-index: 2; top: 21px; left: 456px; width: 168px; height: 63px; border-radius: 32px; background: rgba(38, 50, 63, .82); display: flex; align-items: center; justify-content: center; font-size: 38.5px; font-weight: 500; }

.msg { position: relative; flex: none; }
.out { align-self: flex-end; margin-right: 31px; height: 88px; padding: 0 18px 0 32px; display: flex; align-items: center; border-radius: 44px 18px 18px 44px; background: linear-gradient(#a94fa3 400px, #8347bb 1170px, #7c47be 1360px, #666df0 2160px) fixed; }
.out-text { font-size: 44px; line-height: 52px; color: #f6f0fb; padding-top: 2px; }
.meta { display: flex; align-items: center; margin-left: 25px; margin-top: 30px; }
.time { font-size: 33px; line-height: 38px; color: #f2e9f8; }
.ticks { width: 44px; height: 24px; margin-left: 13px; }
.first-clip { margin-top: -37px; border-top-right-radius: 44px; }
.group-start { margin-top: 22px; }
.group-end { margin-top: 24px; }
.top-round { border-top-right-radius: 44px; }
.next { margin-top: 7px; }
.tall { height: 89px; }
.tail { border-bottom-right-radius: 0; }
.out.tail::after { content: ""; position: absolute; right: -15px; bottom: 0; width: 16px; height: 30px; background: inherit; background-attachment: fixed; -webkit-mask: radial-gradient(ellipse 16px 27px at 100% 0, transparent 98%, #000 100%); mask: radial-gradient(ellipse 16px 27px at 100% 0, transparent 98%, #000 100%); }

.in { margin: 18px 0 0 31px; width: 891px; padding: 18px 30px 19px 31px; background: #222e3b; border-radius: 42px 42px 18px 0; color: #f4f6f8; }
.in.tail::before { content: ""; position: absolute; left: -15px; bottom: 0; width: 16px; height: 30px; background: inherit; -webkit-mask: radial-gradient(ellipse 16px 27px at 0 0, transparent 98%, #000 100%); mask: radial-gradient(ellipse 16px 27px at 0 0, transparent 98%, #000 100%); }
.second { margin-top: 20px; }
.line { margin: 0; font-size: 43.9px; line-height: 52px; white-space: nowrap; }
.party { margin-left: 1px; }
.after-emoji { margin-left: 9px; }
.link { color: #6ab3ec; }
.in-time { position: absolute; right: 31px; bottom: 9px; font-size: 33px; line-height: 38px; color: #6d7c8a; }

.emoji { flex: none; }
.party { width: 52px; height: 52px; vertical-align: -10px; }
.keys { margin: 9px 0 0 29px; width: 889px; display: grid; grid-template-columns: 438px 438px; gap: 11px 13px; }
.key { height: 121px; border: 0; border-radius: 30px; background: rgba(160, 190, 225, .115); color: #fff; font-family: inherit; font-size: 42px; font-weight: 500; display: flex; align-items: center; justify-content: center; gap: 10px; padding: 0; white-space: nowrap; }
.key.bl { border-bottom-left-radius: 58px; }
.key.br { border-bottom-right-radius: 58px; }
.k-case { width: 49px; height: 46px; margin-top: 2px; }
.k-clip { width: 42px; height: 50px; margin: 4px 4px 0 4px; }
.k-scroll { width: 47px; height: 50px; margin-right: 2px; margin-top: 4px; }
.k-sos { width: 49px; height: 50px; margin-top: 2px; }
.fade { -webkit-mask: linear-gradient(90deg, #000 calc(100% - 24px), transparent); mask: linear-gradient(90deg, #000 calc(100% - 24px), transparent); }

.composer { height: 136px; flex: none; background: #212c3a; display: flex; align-items: center; padding: 4px 42px 0 28px; }
.menu { width: 227px; height: 88px; border: 0; border-radius: 44px; background: #5ea5de; color: #fff; font-family: inherit; font-size: 41.5px; font-weight: 500; display: flex; align-items: center; padding: 0 0 0 32px; gap: 18px; }
.menu-ic { width: 45px; height: 36px; fill: none; stroke: #fff; stroke-width: 6; stroke-linecap: round; }
.comp-ic { fill: none; stroke: #667785; stroke-width: 4; stroke-linecap: round; stroke-linejoin: round; overflow: visible; }
.fillc { fill: #667785; stroke: none; }
.sticker { width: 62px; height: 64px; margin-left: 26px; }
.placeholder { font-size: 49px; color: #667785; margin: -4px 0 0 32px; flex: 1; }
.attach { width: 53px; height: 62px; }
.mic { width: 48px; height: 66px; margin-left: 81px; }

.navbar { height: 44px; flex: none; background: #151c25; display: flex; justify-content: center; padding-top: 17px; }
.home { width: 399px; height: 10px; border-radius: 5px; background: #fff; }
```
